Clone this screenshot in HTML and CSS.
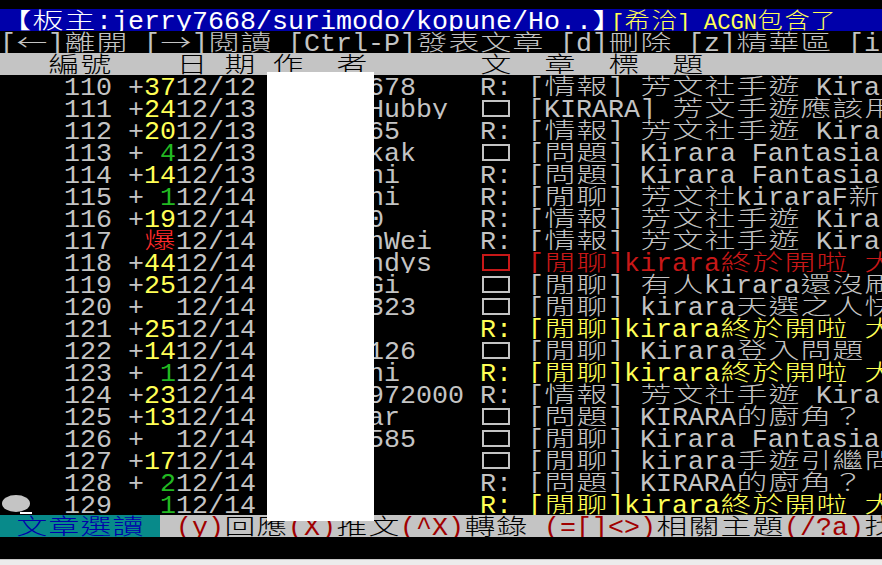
FILE: index.html
```html
<!DOCTYPE html>
<html lang="zh-Hant">
<head>
    <meta charset="UTF-8">
    <meta name="viewport" content="width=device-width, initial-scale=1.0">
    <title>批踢踢 - 文章列表</title>
    <link rel="stylesheet" href="styles.css">
</head>
<body>

    <div class="term">
        <!-- title / menu / column header -->
        <div class="line title"><span class="bm">【板主:jerry7668/surimodo/kopune/Ho..】</span><span class="board">[希洽] ACGN包含了</span></div>
        <div class="line">[←]離開 [→]閱讀 [Ctrl-P]發表文章 [d]刪除 [z]精華區 [i]看板資訊/設定 [h]說明</div>
        <div class="line head">   編號    日 期 作  者       文  章  標  題</div>

        <!-- article list -->
        <div class="line">    110 +<span class="y">37</span>12/12       678    R: [情報] 芳文社手遊 Kira</div>
        <div class="line">    111 +<span class="y">24</span>12/13       Hubby  <span class="box"></span> [KIRARA] 芳文手遊應該用</div>
        <div class="line">    112 +<span class="y">20</span>12/13       65     R: [情報] 芳文社手遊 Kira</div>
        <div class="line">    113 + <span class="gr">4</span>12/13       kak    <span class="box"></span> [問題] Kirara Fantasia</div>
        <div class="line">    114 +<span class="y">14</span>12/13       ni     R: [問題] Kirara Fantasia</div>
        <div class="line">    115 + <span class="gr">1</span>12/14       ni     R: [閒聊] 芳文社kiraraF新</div>
        <div class="line">    116 +<span class="y">19</span>12/14       0      R: [情報] 芳文社手遊 Kira</div>
        <div class="line">    117  <span class="r">爆</span>12/14       nWei   R: [情報] 芳文社手遊 Kira</div>
        <div class="line">    118 +<span class="y">44</span>12/14       ndys   <span class="dr"><span class="box"></span> [閒聊]kirara終於開啦 大</span></div>
        <div class="line">    119 +<span class="y">25</span>12/14       Gi     <span class="box"></span> [閒聊] 有人kirara還沒刷</div>
        <div class="line">    120 +  12/14       323    <span class="box"></span> [閒聊] kirara天選之人快</div>
        <div class="line">    121 +<span class="y">25</span>12/14              <span class="y">R: [閒聊]kirara終於開啦 大</span></div>
        <div class="line">    122 +<span class="y">14</span>12/14       126    <span class="box"></span> [閒聊] Kirara登入問題</div>
        <div class="line">    123 + <span class="gr">1</span>12/14       ni     <span class="y">R: [閒聊]kirara終於開啦 大</span></div>
        <div class="line">    124 +<span class="y">23</span>12/14       972000 R: [情報] 芳文社手遊 Kira</div>
        <div class="line">    125 +<span class="y">13</span>12/14       ar     <span class="box"></span> [問題] KIRARA的廚角？</div>
        <div class="line">    126 +  12/14       585    <span class="box"></span> [閒聊] Kirara Fantasia</div>
        <div class="line">    127 +<span class="y">17</span>12/14              <span class="box"></span> [閒聊] kirara手遊引繼問</div>
        <div class="line">    128 + <span class="gr">2</span>12/14              R: [問題] KIRARA的廚角？</div>
        <div class="line"><span class="dot"></span>  129   <span class="gr">1</span>12/14              <span class="y">R: [閒聊]kirara終於開啦 大</span></div>

        <!-- key help -->
        <div class="line status"><span class="mode"> 文章選讀 </span> <span class="k">(y)</span>回應<span class="k">(X)</span>推文<span class="k">(^X)</span>轉錄 <span class="k">(=[]&lt;&gt;)</span>相關主題<span class="k">(/?a)</span>找標題/作者</div>
        <div class="line"></div>

        <!-- author column is blanked out -->
        <div class="mask"></div>
    </div>
    <div class="foot"></div>

    <script src="script.js"></script>
</body>
</html>
```

FILE: styles.css
```css
body {
    margin: 0;
    background-color: #000;
}

.term {
    position: relative;
    width: 882px;
    padding-top: 9px;
    overflow: hidden;
    font-family: "Liberation Mono", "Noto Sans CJK TC", monospace;
    font-size: 26.67px;
    line-height: 26px;
    color: #c4c4c4;
}

.line {
    height: 22px;
    white-space: pre;
    overflow: hidden;
}

/* full-width chars take two cells */
.wide {
    display: inline-block;
    width: 32px;
    text-align: center;
    font-family: "Noto Sans CJK TC", sans-serif;
    font-size: 22px;
    font-weight: 300;
    line-height: 19px;
    vertical-align: top;
    transform: scaleX(1.4);
}

.title {
    background-color: #0000aa;
}

.bm {
    color: #fff;
}

.board {
    margin-left: -13px;
    font-size: 22.2px;
    color: #ffff55;
}

.board .wide {
    width: 26.5px;
    transform: scaleX(1.15);
}

.head {
    background-color: #c4c4c4;
    color: #000;
}

.status {
    background-color: #c4c4c4;
    color: #000;
}

.mode {
    background-color: #088a8a;
    color: #0000aa;
}

.k {
    color: #a00000;
}

.y {
    color: #ffff55;
}

.gr {
    color: #22b822;
}

.r {
    color: #ff2a2a;
}

.dr {
    color: #c81818;
}

.box {
    display: inline-block;
    width: 24px;
    height: 13px;
    margin: 3px 2px 0;
    border: 2px solid currentColor;
    vertical-align: top;
}

.dot {
    display: inline-block;
    position: relative;
    width: 28px;
    height: 17px;
    margin: 2px 2px 0;
    border-radius: 50%;
    background-color: #c4c4c4;
    vertical-align: top;
}

.dot::after {
    content: "";
    position: absolute;
    left: 18px;
    top: 17px;
    width: 12px;
    height: 2px;
    background-color: #fff;
}

.mask {
    position: absolute;
    left: 267px;
    top: 72px;
    width: 107px;
    height: 449px;
    background-color: #fff;
}

.foot {
    height: 5px;
    background-color: #ececec;
    border-top: 1px solid #c8c8c8;
}
```

FILE: script.js
```js
// Wrap every non-ASCII char so it fills two terminal cells
document.querySelectorAll('.line').forEach(function (line) {
    var walker = document.createTreeWalker(line, NodeFilter.SHOW_TEXT);
    var nodes = [];
    while (walker.nextNode()) nodes.push(walker.currentNode);

    nodes.forEach(function (node) {
        var text = node.nodeValue;
        if (!/[^\x00-\x7f]/.test(text)) return;

        var frag = document.createDocumentFragment();
        text.split(/([^\x00-\x7f])/).forEach(function (part, i) {
            if (!part) return;
            if (i % 2) {
                var span = document.createElement('span');
                span.className = 'wide';
                span.textContent = part;
                frag.appendChild(span);
            } else {
                frag.appendChild(document.createTextNode(part));
            }
        });
        node.parentNode.replaceChild(frag, node);
    });
});
```
